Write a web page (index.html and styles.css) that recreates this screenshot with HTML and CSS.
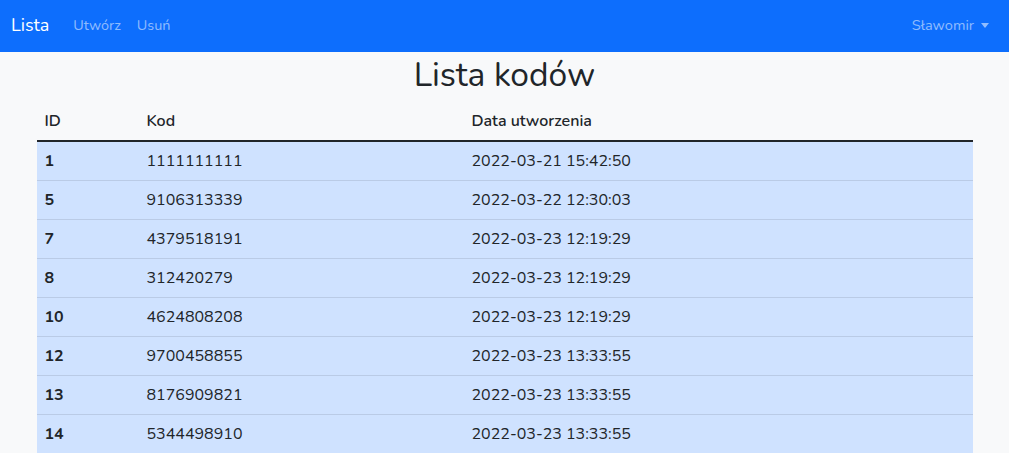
FILE: index.html
```html
<!DOCTYPE html>
<html lang="pl">
<head>
<meta charset="utf-8">
<title>Lista kodów</title>
<link rel="stylesheet" href="styles.css">
</head>
<body>
<nav class="navbar">
  <div class="nav-left">
    <a class="brand" href="#">Lista</a>
    <a class="nav-link" href="#">Utwórz</a>
    <a class="nav-link" href="#">Usuń</a>
  </div>
  <a class="nav-link user" href="#">Sławomir <span class="caret"></span></a>
</nav>
<main class="container">
  <h1 class="title">Lista kodów</h1>
  <table class="codes">
    <thead>
      <tr><th>ID</th><th>Kod</th><th>Data utworzenia</th></tr>
    </thead>
    <tbody>
      <tr><th>1</th><td>1111111111</td><td>2022-03-21 15:42:50</td></tr>
      <tr><th>5</th><td>9106313339</td><td>2022-03-22 12:30:03</td></tr>
      <tr><th>7</th><td>4379518191</td><td>2022-03-23 12:19:29</td></tr>
      <tr><th>8</th><td>312420279</td><td>2022-03-23 12:19:29</td></tr>
      <tr><th>10</th><td>4624808208</td><td>2022-03-23 12:19:29</td></tr>
      <tr><th>12</th><td>9700458855</td><td>2022-03-23 13:33:55</td></tr>
      <tr><th>13</th><td>8176909821</td><td>2022-03-23 13:33:55</td></tr>
      <tr><th>14</th><td>5344498910</td><td>2022-03-23 13:33:55</td></tr>
    </tbody>
  </table>
</main>
</body>
</html>
```
FILE: styles.css
```css
html, body {
  margin: 0;
  padding: 0;
}
body {
  background: #f8f9fa;
  color: #212529;
  font-family: "Nunito", "Lato", "Noto Sans", sans-serif;
  font-size: 16px;
  line-height: 1.5;
}
a { text-decoration: none; }
.navbar {
  background: #0d6efd;
  height: 52px;
  display: flex;
  align-items: center;
  justify-content: space-between;
  padding: 0 12px 0 11px;
  box-sizing: border-box;
}
.nav-left {
  display: flex;
  align-items: center;
}
.brand {
  color: #fff;
  font-size: 18px;
  margin-right: 16px;
  padding: 5px 0;
}
.nav-link {
  color: rgba(255,255,255,.55);
  font-size: 14.4px;
  padding: 8px 8px;
}
.nav-left .nav-link:first-of-type { padding-left: 8px; }
.user {
  display: flex;
  align-items: center;
  gap: 7px;
  font-size: 14.6px;
}
.caret {
  display: inline-block;
  width: 0;
  height: 0;
  border-left: 4.5px solid transparent;
  border-right: 4.5px solid transparent;
  border-top: 5px solid rgba(255,255,255,.55);
}
.container {
  max-width: 936px;
  margin: 0 auto;
  padding: 0 12px;
}
.title {
  text-align: center;
  font-weight: 400;
  font-size: 33.6px;
  line-height: 40px;
  margin: 3px 0 7px;
}
.codes {
  width: 100%;
  border-collapse: collapse;
}
.codes th, .codes td {
  text-align: left;
  padding: 8px 8px;
  line-height: 22px;
  font-size: 16px;
}
.codes thead th {
  font-weight: 600;
  border-bottom: 2px solid #212529;
}
.codes thead th:nth-child(1) { width: 86px; }
.codes thead th:nth-child(2) { width: 309px; }
.codes tbody tr {
  background: #cfe2ff;
}
.codes tbody tr + tr th,
.codes tbody tr + tr td {
  border-top: 1px solid #bacbe6;
}
.codes tbody th { font-weight: 700; }
```
